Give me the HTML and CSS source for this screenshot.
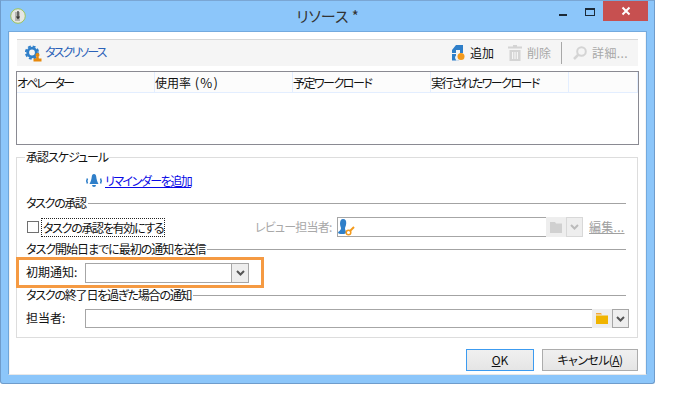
FILE: index.html
```html
<!DOCTYPE html>
<html lang="ja">
<head>
<meta charset="utf-8">
<title>リソース *</title>
<link rel="stylesheet" href="styles.css">
</head>
<body>
<div class="window">
  <header class="titlebar">
    <svg class="appicon" width="16" height="16" viewBox="0 0 16 16"><circle cx="8" cy="8" r="7.3" fill="#e6e6e2" stroke="#9cc45c"/><path d="M5 4h5v9H5z" fill="#b5b5b0"/><path d="M8 3v7M6.500 8.500 8 10.500 9.500 8.500" fill="none" stroke="#333" stroke-width="1.200"/></svg>
    <div class="title">リソース *</div>
    <div class="controls">
      <span class="ctl ctl-min"></span>
      <span class="ctl ctl-max"></span>
      <span class="ctl ctl-close"><svg width="10" height="10" viewBox="0 0 10 10"><path d="M1.500 1.500l7 7M8.500 1.500l-7 7" stroke="#fff" stroke-width="2"/></svg></span>
    </div>
  </header>
  <main class="client">
    <div class="toolbar">
      <svg class="tb-icon" width="17" height="17" viewBox="0 0 17 17"><circle cx="7" cy="7.500" r="4.300" fill="none" stroke="#2f7fc9" stroke-width="2.800"/><circle cx="7" cy="7.500" r="6.200" fill="none" stroke="#2f7fc9" stroke-width="1.800" stroke-dasharray="2.900 1.970"/><circle cx="12.500" cy="10" r="2" fill="#e8890c"/><path fill="#e8890c" d="M11.500 11.500h2l.4 2H16.500v3h-8v-3h2.600z"/></svg>
      <span class="tb-title">タスクリソース</span>
      <div class="tb-actions">
        <button class="tb-btn tb-add"><svg width="14" height="16" viewBox="0 0 14 16"><path fill="#2f7fc9" d="M5 0h7v8H9V5H5v3H1V5zM1 9h4v1.500a3 3 0 0 0 3 5H1z"/><circle cx="10" cy="11.500" r="3.500" fill="#f39a1c"/></svg>追加</button>
        <button class="tb-btn is-off"><svg width="14" height="16" viewBox="0 0 14 16"><path fill="#d4d4d4" d="M5 0h4v1.500h5v2H0v-2h5zM1.500 5h11v11h-11zM4 7v7h1.200V7zm2.400 0v7h1.200V7zm2.400 0v7H10V7z" fill-rule="evenodd"/></svg>削除</button>
        <span class="tb-sep"></span>
        <button class="tb-btn is-off tb-detail"><svg width="14" height="14" viewBox="0 0 14 14"><circle cx="8.500" cy="5.500" r="4.300" fill="none" stroke="#d4d4d4" stroke-width="2"/><path d="M5.500 8.500L1 13" stroke="#d4d4d4" stroke-width="2.500"/></svg>詳細...</button>
      </div>
    </div>

    <div class="table">
      <div class="thead">
        <span class="th tight-20">オペレーター</span>
        <span class="th th-usage">使用率 <span class="pct">(%)</span></span>
        <span class="th tight-15">予定ワークロード</span>
        <span class="th tight-15">実行されたワークロード</span>
        <span class="th"></span>
      </div>
    </div>

    <fieldset class="group">
      <legend class="tight-10">承認スケジュール</legend>

      <div class="reminder">
        <svg width="18" height="14" viewBox="0 0 18 14"><path fill="#2f7fc9" d="M9 0c1.500 0 2 1.200 2.200 2.500.3 3 1 5 2.300 7.500h-9C5.800 7.500 6.500 5.500 6.800 2.500 7 1.200 7.500 0 9 0zM7 11h4a2 2 0 0 1-4 0z"/><path d="M2.500 4.500Q1 7 2.500 9.500M15.500 4.500Q17 7 15.500 9.500" fill="none" stroke="#2f7fc9" stroke-width="1.500"/></svg>
        <a class="link tight-15" href="#">リマインダーを追加</a>
      </div>

      <div class="section"><span class="tight-13">タスクの承認</span></div>
      <div class="row row-review">
        <label class="check"><span class="box"></span><span class="check-text tight-13">タスクの承認を有効にする</span></label>
        <span class="off-label tight-08">レビュー担当者:</span>
        <div class="picker picker-off">
          <span class="field field-review"><svg width="20" height="17" viewBox="0 0 20 17"><path fill="#2f7fc9" d="M5 0c2.500 0 3.500 2 3.200 4.500C8 7 7 8 7 9.500c0 1.500 1 2.500 1 4 0 1-1.500 1.500-4 1.500-2 0-4-.4-4-1.500 0-1 3-2 3-4C3 8 2 7 2 4.500 2 2 3 0 5 0z"/><circle cx="10.500" cy="13.500" r="2.300" fill="none" stroke="#f39a1c" stroke-width="1.500"/><path d="M12 12l4-4" stroke="#f39a1c" stroke-width="2"/></svg></span>
          <span class="folder"><svg width="12" height="11" viewBox="0 0 12 11"><path fill="#d0d0d0" d="M0 0h5l1 1.500h6V11H0z"/></svg></span>
          <span class="drop"><svg width="9" height="6" viewBox="0 0 9 6"><path d="M1 1l3.500 3.500L8 1" fill="none" stroke="#bbb" stroke-width="2"/></svg></span>
        </div>
        <a class="edit" href="#">編集...</a>
      </div>

      <div class="section section-2"><span class="tight-10">タスク開始日までに最初の通知を送信</span></div>
      <div class="row row-2">
        <span class="label">初期通知:</span>
        <div class="combo"><span class="drop drop-combo"><svg width="9" height="6" viewBox="0 0 9 6"><path d="M1 1l3.500 3.500L8 1" fill="none" stroke="#555" stroke-width="2"/></svg></span></div>
        <div class="highlight"></div>
      </div>

      <div class="section section-2"><span class="tight-12">タスクの終了日を過ぎた場合の通知</span></div>
      <div class="row row-2 row-owner">
        <span class="label">担当者:</span>
        <div class="picker picker-full">
          <span class="field"></span>
          <span class="folder"><svg width="12" height="11" viewBox="0 0 12 11"><path fill="#f0b400" d="M0 2.500h12V11H0z"/><path fill="#f3a93c" d="M0 0h5l1 1.500H0z"/></svg></span>
          <span class="drop drop-on"><svg width="9" height="6" viewBox="0 0 9 6"><path d="M1 1l3.500 3.500L8 1" fill="none" stroke="#555" stroke-width="2"/></svg></span>
        </div>
      </div>
    </fieldset>

    <footer class="footer">
      <button class="btn btn-ok"><u>O</u>K</button>
      <button class="btn btn-cancel">キャンセル(<u>A</u>)</button>
    </footer>
  </main>
</div>
</body>
</html>
```
FILE: styles.css
```css
* { box-sizing: border-box; }
html, body { margin: 0; background: #fff; }
body {
  font-family: "Noto Sans CJK JP", "Liberation Sans", sans-serif;
  font-size: 12px;
  line-height: 16px;
  color: #111;
  font-feature-settings: "palt";
}
/* Narrow kana of the original UI face */
.tight-08 { letter-spacing: -0.8px; }
.tight-10 { letter-spacing: -1px; }
.tight-12 { letter-spacing: -1.2px; }
.tight-13 { letter-spacing: -1.3px; }
.tight-15 { letter-spacing: -1.5px; }
.tight-20 { letter-spacing: -2px; }
.window {
  width: 655px;
  height: 384px;
  background: #8cc6fa;
  border: 1px solid #6f9ccb;
  border-top-color: #7aa6d4;
  border-radius: 0 0 3px 3px;
  display: flex;
  flex-direction: column;
}
.titlebar {
  height: 30px;
  flex: none;
  display: flex;
  align-items: flex-start;
  position: relative;
  padding-left: 9px;
}
.appicon { margin-top: 7px; }
.title {
  position: absolute;
  left: 0;
  right: 0;
  top: 4px;
  text-align: center;
  font-size: 15px;
  line-height: 22px;
  color: #333;
}
.controls {
  position: absolute;
  right: 6px;
  top: 0;
  display: flex;
  align-items: flex-start;
}
.ctl { display: block; }
.ctl-min { width: 8px; height: 2px; margin: 13px 18px 0 0; background: #1c2a38; }
.ctl-max { width: 10px; height: 8px; margin: 7px 8px 0 0; border: 1px solid #1c2a38; border-top-width: 2px; }
.ctl-close {
  width: 45px;
  height: 20px;
  background: #c75050;
  display: flex;
  align-items: center;
  justify-content: center;
}
.client {
  margin: 0 7px;
  height: 344px;
  background: #fff;
  border: 1px solid #74aade;
  border-bottom-color: #e8e8e8;
  border-left-color: #6fa5d8;
  padding: 7px 8px 0 8px;
  display: flex;
  flex-direction: column;
  box-shadow: inset 1px 0 0 #f4f4f4, inset -1px 0 0 #f4f4f4;
}
.toolbar {
  height: 27px;
  flex: none;
  background: #f5f5f5;
  border-top: 1px solid #d8d8d8;
  display: flex;
  align-items: center;
  padding-left: 8px;
}
.tb-icon { flex: none; }
.tb-title { margin: 0 0 2px 3px; color: #2b62b8; letter-spacing: -1.9px; line-height: 14px; }
.tb-actions { margin-left: auto; display: flex; align-items: center; padding-right: 10px; }
.tb-btn {
  display: flex;
  align-items: center;
  gap: 5px;
  padding: 0;
  margin-left: 12px;
  border: 0;
  background: none;
  font: inherit;
  font-feature-settings: inherit;
  color: #111;
}
.tb-add { margin-right: 2px; }
.tb-btn.is-off { color: #a8a8a8; }
.tb-detail { letter-spacing: 0.4px; }
.tb-sep { width: 1px; height: 22px; background: #a8a8a8; margin: 0 0 0 10px; }
.tb-sep + .tb-btn { margin-left: 11px; }
.table {
  margin: 5px -1px 0 -1px;
  height: 74px;
  flex: none;
  border: 1px solid #8a8a92;
  background: #fff;
}
.thead {
  height: 21px;
  display: grid;
  grid-template-columns: repeat(4, 138px) 1fr;
  background: #fcfcfc;
  border-bottom: 1px solid #e3eeff;
}
.th {
  border-right: 1px solid #e3eeff;
  padding-top: 3px;
  white-space: nowrap;
}
.th-usage { word-spacing: 1px; }
.pct { font-size: 13px; letter-spacing: 1.2px; }
.group {
  margin: 4px 0 0 -1px;
  padding: 0 11px 0 9px;
  height: 189px;
  flex: none;
  border: 1px solid #ddd;
  min-width: 0;
}
.group legend { padding: 0 1px; margin-left: -1px; }
.reminder {
  height: 16px;
  margin-top: 8px;
  display: flex;
  align-items: center;
  padding-left: 59px;
  gap: 2px;
}
.link { color: #0a0ae6; text-decoration: underline; }
.section {
  display: flex;
  align-items: center;
  height: 16px;
  margin-top: 6px;
  gap: 2px;
}
.section::after { content: ""; flex: 1; height: 1px; background: #a3a3a3; }
.section-2 { margin-top: 4px; }
.row { display: flex; align-items: center; height: 20px; margin-top: 6px; position: relative; }
.row-owner { height: 19px; }
.check { display: flex; align-items: center; width: 229px; padding-left: 1px; flex: none; }
.box { width: 12px; height: 12px; border: 1px solid #707070; background: #fff; flex: none; }
.check-text { margin-left: 3px; padding: 0 1px; outline: 1px dotted #222; line-height: 17px; white-space: nowrap; }
.off-label { color: #a8a8a8; width: 82px; flex: none; white-space: nowrap; }
.picker { display: flex; height: 100%; }
.picker-off { width: 246px; flex: none; }
.picker-full { width: 544px; flex: none; }
.field { flex: 1; border-top: 1px solid #a6a6a6; border-bottom: 1px solid #a6a6a6; background: #fff; }
.picker-full .field { border-left: 1px solid #a6a6a6; }
.field-review { border-left: 1px solid #a6a6a6; display: flex; align-items: flex-end; }
.folder { width: 20px; flex: none; background: #eee; display: flex; align-items: center; justify-content: center; }
.drop {
  width: 17px;
  flex: none;
  background: #eee;
  border: 1px solid #d8d8d8;
  display: flex;
  align-items: center;
  justify-content: center;
}
.drop-on { border-color: #a6a6a6; }
.edit { margin-left: 6px; color: #a0a0a0; text-decoration: underline; letter-spacing: 0.3px; }
.label { width: 59px; flex: none; padding-bottom: 2px; }
.combo {
  width: 164px;
  height: 100%;
  border: 1px solid #a6a6a6;
  background: #fff;
  display: flex;
  justify-content: flex-end;
}
.drop-combo { border: 0; border-left: 1px solid #a6a6a6; width: 17px; }
.highlight {
  position: absolute;
  left: -10px;
  top: -6px;
  width: 248px;
  height: 31px;
  border: 3px solid #f59a42;
  pointer-events: none;
}
.footer {
  flex: 1;
  display: flex;
  justify-content: flex-end;
  gap: 8px;
  margin-top: 11px;
}
.btn {
  height: 22px;
  padding: 0;
  border: 1px solid #acacac;
  background: linear-gradient(#f0f0f0, #e5e5e5);
  font: inherit;
  font-feature-settings: inherit;
  color: #111;
}
.btn-ok { width: 68px; border-color: #3c9bf0; }
.btn-cancel { width: 96px; letter-spacing: -0.6px; }
```
